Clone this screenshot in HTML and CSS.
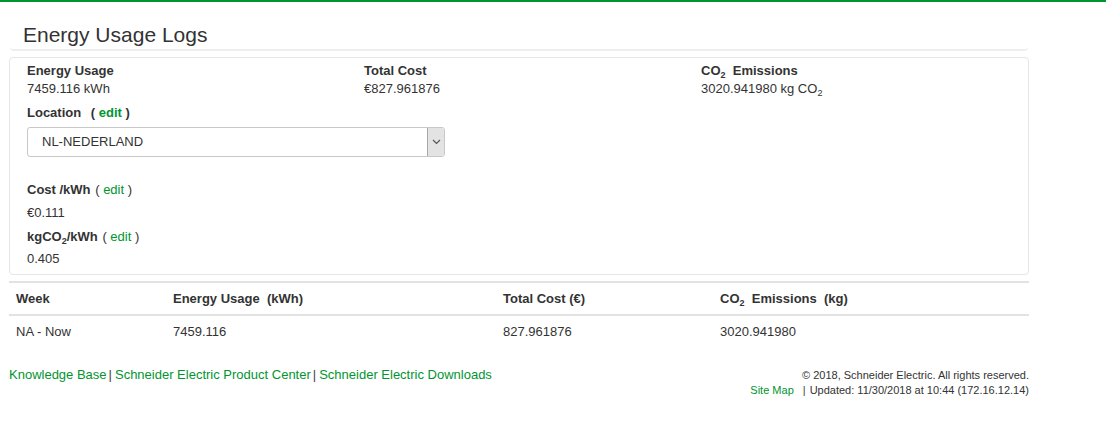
FILE: index.html
```html
<!DOCTYPE html>
<html>
<head>
<meta charset="utf-8">
<link rel="stylesheet" href="styles.css">
</head>
<body>
<div class="topbar"></div>
<div class="container">
  <div class="page-header"><h1>Energy Usage Logs</h1></div>
  <div class="panel">
    <div class="summary">
      <div class="cell"><div class="lbl">Energy Usage</div><div class="val">7459.116 kWh</div></div>
      <div class="cell"><div class="lbl">Total Cost</div><div class="val">€827.961876</div></div>
      <div class="cell"><div class="lbl">CO<sub>2</sub>&nbsp; Emissions</div><div class="val">3020.941980 kg CO<sub>2</sub></div></div>
    </div>
    <div class="loc-label"><span class="lbl">Location</span> <span class="edit-b">( <a href="#">edit</a> )</span></div>
    <div class="select">
      <span class="sel-text">NL-NEDERLAND</span>
      <span class="arrow"><svg width="9" height="6" viewBox="0 0 9 6"><path d="M1 1 L4.5 4.5 L8 1" fill="none" stroke="#555" stroke-width="1.2"/></svg></span>
    </div>
    <div class="rate-label"><span class="lbl">Cost /kWh</span> <span class="edit">( <a href="#">edit</a> )</span></div>
    <div class="rate-val">€0.111</div>
    <div class="rate-label second"><span class="lbl">kgCO<sub>2</sub>/kWh</span> <span class="edit">( <a href="#">edit</a> )</span></div>
    <div class="rate-val last">0.405</div>
  </div>
  <table class="logs">
    <thead>
      <tr><th class="c1">Week</th><th class="c2">Energy Usage&nbsp; (kWh)</th><th class="c3">Total Cost (€)</th><th>CO<sub>2</sub>&nbsp; Emissions&nbsp; (kg)</th></tr>
    </thead>
    <tbody>
      <tr><td>NA - Now</td><td>7459.116</td><td>827.961876</td><td>3020.941980</td></tr>
    </tbody>
  </table>
  <div class="footer">
    <div class="links"><a href="#">Knowledge Base</a><span class="sep">|</span><a href="#">Schneider Electric Product Center</a><span class="sep">|</span><a href="#">Schneider Electric Downloads</a></div>
    <div class="legal">
      <div>© 2018, Schneider Electric. All rights reserved.</div>
      <div><a href="#">Site Map</a><span class="sep2">|</span>Updated: 11/30/2018 at 10:44 (172.16.12.14)</div>
    </div>
  </div>
</div>
</body>
</html>
```

FILE: styles.css
```css
html, body {
  margin: 0;
  padding: 0;
  background: #fff;
  font-family: "Liberation Sans", Arial, sans-serif;
  font-size: 13px;
  color: #333;
}
a { color: #009530; text-decoration: none; }
sub { font-size: 9px; vertical-align: -3px; line-height: 0; }
.topbar { height: 2px; background: #009530; }
.container { width: 1020px; margin-left: 9px; }
.page-header {
  margin-left: 1px;
  width: 1018px;
  height: 49px;
  border-bottom: 2px solid #eee;
  border-radius: 0 0 4px 4px;
  box-sizing: border-box;
}
.page-header h1 {
  margin: 0;
  padding: 21px 0 0 13px;
  font-size: 21px;
  font-weight: normal;
  line-height: 24px;
  color: #333;
}
.panel {
  margin-top: 6px;
  border: 1px solid #e6e6e6;
  border-radius: 4px;
  padding: 4px 17px 6px 17px;
}
.summary { display: grid; grid-template-columns: 337px 337px 1fr; line-height: 18px; }
.lbl { font-weight: bold; }
.loc-label { margin-top: 6px; line-height: 18px; }
.edit-b { font-weight: bold; margin-left: 6px; }
.select {
  margin-top: 5px;
  width: 418px;
  height: 30px;
  box-sizing: border-box;
  border: 1px solid #c8c8c8;
  border-radius: 3px;
  display: flex;
  align-items: stretch;
  justify-content: space-between;
}
.sel-text { padding-left: 14px; line-height: 28px; }
.arrow {
  width: 16px;
  background: #e3e3e3;
  border-left: 1px solid #a8a8a8;
  display: flex;
  align-items: center;
  justify-content: center;
  border-radius: 0 2px 2px 0;
}
.rate-label { margin-top: 24px; line-height: 18px; }
.rate-label.second { margin-top: 6px; }
.edit { margin-left: 1px; }
.rate-val { margin-top: 5px; line-height: 18px; }
.rate-val.last { margin-top: 4px; }
.logs {
  margin-top: 6px;
  width: 100%;
  border-collapse: collapse;
  border-top: 2px solid #e2e2e2;
}
.logs th, .logs td {
  text-align: left;
  padding: 7px 7px 8px 7px;
  line-height: 17px;
}
.logs th { font-weight: bold; border-bottom: 2px solid #e2e2e2; padding-bottom: 7px; }
.logs .c1 { width: 143px; }
.logs .c2 { width: 316px; }
.logs .c3 { width: 203px; }
.footer {
  margin-top: 17px;
  display: flex;
  justify-content: space-between;
  align-items: flex-start;
}
.links { line-height: 18px; padding-top: 1px; }
.sep { color: #444; margin: 0 3px 0 2px; }
.legal { text-align: right; font-size: 11px; line-height: 15px; padding-top: 3px; }
.sep2 { margin: 0 4px 0 9px; color: #444; }
```
